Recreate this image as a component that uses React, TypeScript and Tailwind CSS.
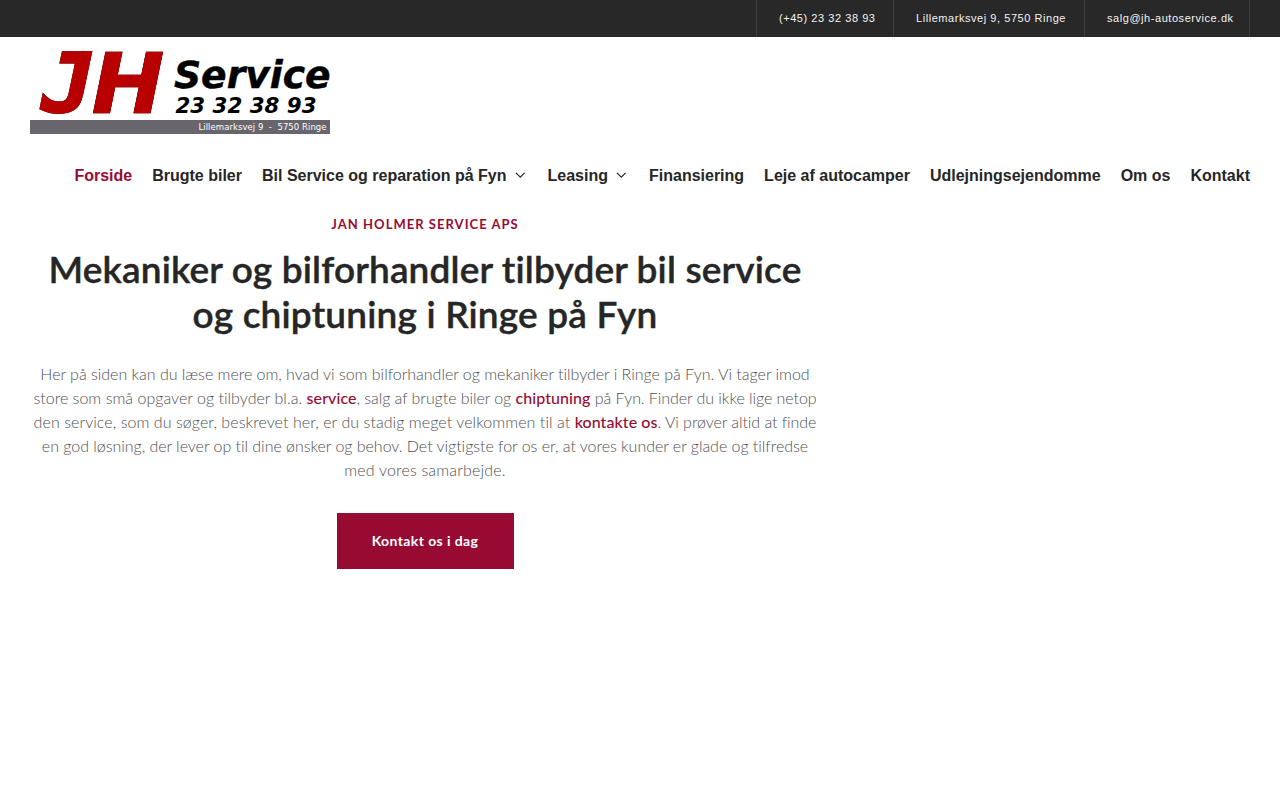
const navItems = [
  { label: "Forside", active: true },
  { label: "Brugte biler" },
  { label: "Bil Service og reparation på Fyn", menu: true },
  { label: "Leasing", menu: true },
  { label: "Finansiering" },
  { label: "Leje af autocamper" },
  { label: "Udlejningsejendomme" },
  { label: "Om os" },
  { label: "Kontakt" },
];

function Chevron() {
  return (
    <svg className="ml-2 h-3 w-[13px] shrink-0" viewBox="0 0 13 12" fill="none" stroke="#262626" strokeWidth="1.2">
      <path d="M1 2.9 L5.3 7.2 L9.600 2.9" />
    </svg>
  );
}

function Logo() {
  return (
    <svg className="block h-[82px] w-[300px] overflow-visible font-['DejaVu_Sans',sans-serif]" viewBox="0 0 300 82">
      <g className="[filter:drop-shadow(0_0_0.4px_#000)]" fill="#b90000" stroke="#b90000" fontWeight="bold" fontStyle="oblique">
        <text x="11.500" y="60.300" fontSize="81" strokeWidth="2" textLength="53" lengthAdjust="spacingAndGlyphs" fontFamily="DejaVu Sans Mono">J</text>
        <text x="61.500" y="61" fontSize="83" strokeWidth="0.600" textLength="73" lengthAdjust="spacingAndGlyphs">H</text>
      </g>
      <g fill="#000" fontWeight="bold" fontStyle="oblique">
        <text x="144" y="35.500" fontSize="37" stroke="#000" strokeWidth="0.500" textLength="156.500" lengthAdjust="spacingAndGlyphs">Service</text>
        <text x="145.500" y="61.200" fontSize="21.500" textLength="141" lengthAdjust="spacingAndGlyphs">23 32 38 93</text>
      </g>
      <rect y="68" width="300" height="14" fill="#69656d" />
      <text x="168.500" y="78.300" fontSize="8.500" fill="#fff" textLength="128" xmlSpace="preserve" className="whitespace-pre">{"Lillemarksvej 9  -  5750 Ringe"}</text>
    </svg>
  );
}

const link = "font-medium tracking-[0.07px] text-[#970b33]";

export default function App() {
  return (
    <div className="min-h-[800px] bg-white font-['Lato',sans-serif]">
      <div className="flex h-[37px] justify-end bg-[#282828] pr-[30px] font-['Liberation_Sans',Arial,sans-serif] text-[11px] leading-[36px] tracking-[0.55px] text-[#f2f2f2]">
        <div className="w-[137px] border-l border-[#3d3d3d] pl-[22px]">(+45) 23 32 38 93</div>
        <div className="w-[191px] border-l border-[#3d3d3d] pl-[22px]">Lillemarksvej 9, 5750 Ringe</div>
        <div className="w-[166px] border-x border-[#3d3d3d] pl-[22px]">salg@jh-autoservice.dk</div>
      </div>

      <header className="px-[30px] pt-[15px]">
        <Logo />
        <nav className="mt-[30px] flex h-6 justify-end gap-5 whitespace-nowrap font-['Liberation_Sans',Arial,sans-serif] text-base font-bold leading-6 text-[#262626]">
          {navItems.map((item) => (
            <a key={item.label} className={item.active ? "text-[#970b33]" : "flex items-center"}>
              {item.label}
              {item.menu && <Chevron />}
            </a>
          ))}
        </nav>
      </header>

      <main className="ml-[30px] mt-[26px] flex w-[790px] flex-col items-center whitespace-nowrap text-center [font-variant-ligatures:none]">
        <p className="text-[13px] font-bold leading-5 tracking-[1.03px] text-[#970b33]">JAN HOLMER SERVICE APS</p>
        <h1 className="mt-[12px] text-[37px] font-semibold leading-[45px] text-[#262626] [-webkit-text-stroke:0.4px_#262626]">
          <span className="block tracking-[0.15px]">Mekaniker og bilforhandler tilbyder bil service</span>
          <span className="block tracking-[0.17px]">og chiptuning i Ringe på Fyn</span>
        </h1>
        <p className="mt-[26px] text-base font-light leading-6 text-[#505054]">
          <span className="block tracking-[-0.02px]">Her på siden kan du læse mere om, hvad vi som bilforhandler og mekaniker tilbyder i Ringe på Fyn. Vi tager imod</span>
          <span className="block tracking-[-0.06px]">
            <span className="tracking-[0.02px]">store som små opgaver og tilbyder bl.a. </span>
            <a className={link}>service</a>, salg af brugte biler og <a className={link}>chiptuning</a> på Fyn. Finder du ikke lige netop
          </span>
          <span className="block tracking-[-0.06px]">
            <span className="tracking-[0.06px]">den service, som du søger, beskrevet her, er du stadig meget velkommen til at </span>
            <a className={link}>kontakte os</a>. Vi prøver altid at finde
          </span>
          <span className="block tracking-[-0.03px]">en god løsning, der lever op til dine ønsker og behov. Det vigtigste for os er, at vores kunder er glade og tilfredse</span>
          <span className="block tracking-[0.17px]">med vores samarbejde.</span>
        </p>
        <a className="mt-[31px] flex h-14 w-[177px] items-center justify-center bg-[#970b33] text-sm font-bold tracking-[0.4px] text-white">Kontakt os i dag</a>
      </main>
    </div>
  );
}
